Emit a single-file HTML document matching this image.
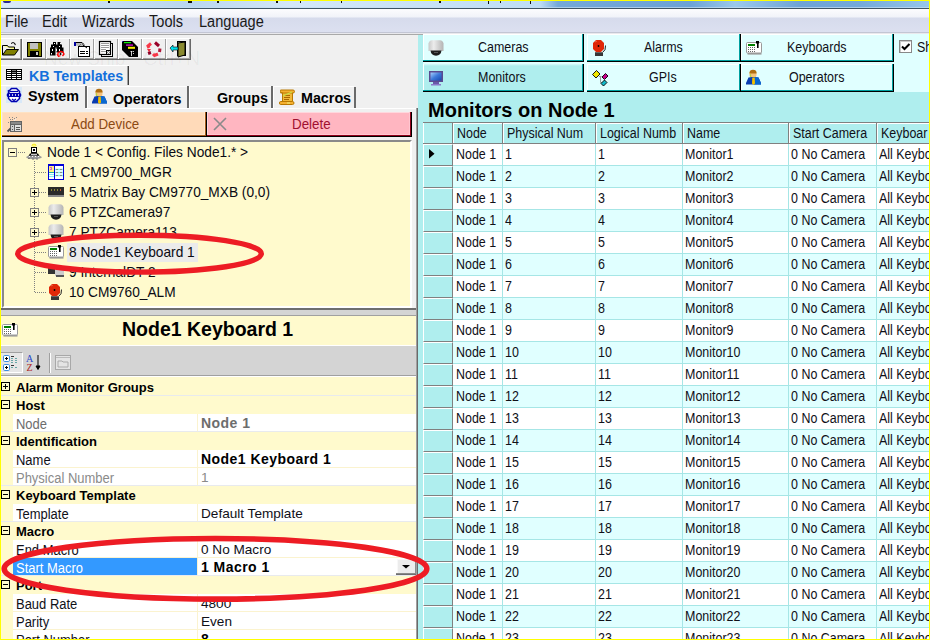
<!DOCTYPE html>
<html><head><meta charset="utf-8">
<style>
*{box-sizing:border-box;margin:0;padding:0}
html,body{width:930px;height:640px;overflow:hidden;background:#F0F0F0}
body{position:relative;font-family:"Liberation Sans",sans-serif;color:#000}
.a{position:absolute}
.t{position:absolute;white-space:nowrap;line-height:1}
svg{position:absolute;overflow:visible}
.mn{top:14px;font-size:16px;transform:scaleX(.91);transform-origin:0 0;color:#1a1a1a}
.tab{position:absolute;font-weight:bold;font-size:14.3px;white-space:nowrap;line-height:1}
.tr{position:absolute;font-size:14.5px;transform:scaleX(.945);transform-origin:0 0;margin-top:-1px;white-space:nowrap;line-height:1;color:#0a0a14}
.dl{position:absolute;background-image:linear-gradient(to right,#808080 50%,transparent 50%);background-size:2px 1px;height:1px}
.dv{position:absolute;background-image:linear-gradient(#808080 50%,transparent 50%);background-size:1px 2px;width:1px}
.pb{position:absolute;width:9px;height:9px;border:1px solid #808080;background:#FFFACD}
.pb:before{content:"";position:absolute;left:1px;top:3px;width:5px;height:1px;background:#000}
.pb.p:after{content:"";position:absolute;left:3px;top:1px;width:1px;height:5px;background:#000}
.pc{position:absolute;left:16px;margin-top:-1px;font-weight:bold;font-size:13px;white-space:nowrap;line-height:1}
.pn{position:absolute;left:16px;margin-top:-0.5px;font-size:13.8px;transform:scaleX(.94);transform-origin:0 0;white-space:nowrap;line-height:1;color:#101018}
.pv{position:absolute;left:201px;margin-top:-1.5px;font-size:13.6px;white-space:nowrap;line-height:1;color:#101018}
.pvb{position:absolute;left:201px;margin-top:-2px;font-size:14px;font-weight:bold;letter-spacing:.45px;white-space:nowrap;line-height:1}
.prow{position:absolute;left:13px;width:404px;height:17px;background:#fff}
.prow:after{content:"";position:absolute;left:184px;top:0;width:1px;height:17px;background:#FBF3CF}
.pline{position:absolute;left:1px;width:416px;height:1px;background:#E8EAEE}
.pbx{position:absolute;left:1px;width:9px;height:9px;border:1px solid #000;background:transparent}
.pbx:before{content:"";position:absolute;left:1px;top:3px;width:5px;height:1px;background:#000}
.pbx.p:after{content:"";position:absolute;left:3px;top:1px;width:1px;height:5px;background:#000}
.btn{position:absolute;height:28px;background:#E0FFFF;box-shadow:inset -1px -1px 0 #000, inset -2px -2px 0 #00A0A0, inset 1px 1px 0 #fff}
.bt{position:absolute;font-size:14px;transform:scaleX(.89);transform-origin:0 0;margin-top:-1px;white-space:nowrap;line-height:1;color:#101018}
.gh{position:absolute;font-size:14px;transform:scaleX(.89);transform-origin:0 0;white-space:nowrap;line-height:1;color:#101018;top:126px}
.gr{position:absolute;left:423px;width:506px;height:22px;border-bottom:1px solid #A6E6E6}
.gr.o{background:#fff}.gr.e{background:#E0FFFF}
.rh{position:absolute;left:0;top:0;width:30px;height:22px;background:#AFEEEE;border-left:1px solid #fff;border-top:1px solid #fff;border-bottom:1px solid #808080;border-right:1px solid #808080}
.gc{position:absolute;top:0;width:1px;height:21px;background:#A6E6E6}
.gt{position:absolute;top:3px;font-size:14px;transform:scaleX(.89);transform-origin:0 0;white-space:nowrap;line-height:1;color:#101018}
.tb{position:absolute;top:38px;height:21px;width:24px;border-top:1px solid #fff;border-left:1px solid #fff;box-shadow:inset -1px -1px 0 #A0A0A0, 1px 1px 0 #696969;background:#F0F0F0}

</style></head><body>

<!-- title bar -->
<div class="a" style="left:0;top:0;width:930px;height:8px;background:linear-gradient(to right,#DAEAF7 0px,#B9D6EF 190px,#D3E7F8 290px,#BEDDF5 540px,#74A8D8 558px,#6CA2D6 690px,#9BC9EC 735px,#6EA3D6 800px,#74A9DA 860px,#96C6EA 928px)"></div>
<div class="a" style="left:3px;top:1px;width:8px;height:2px;background:#2a2a90;border-radius:0 0 3px 3px"></div>
<div class="a" style="left:108px;top:1px;width:2px;height:2px;background:#111"></div>
<div class="a" style="left:188px;top:1px;width:4px;height:2px;background:#111"></div>
<div class="a" style="left:217px;top:1px;width:2px;height:2px;background:#111"></div>
<div class="a" style="left:276px;top:1px;width:2px;height:2px;background:#111"></div>
<div class="a" style="left:300px;top:1px;width:1px;height:2px;background:#111"></div>
<div class="a" style="left:341px;top:1px;width:1px;height:2px;background:#111"></div>
<div class="a" style="left:439px;top:1px;width:2px;height:2px;background:#111"></div>
<div class="a" style="left:488px;top:1px;width:1px;height:3px;background:#111"></div>
<div class="a" style="left:500px;top:1px;width:1px;height:2px;background:#111"></div>
<div class="a" style="left:530px;top:1px;width:1px;height:3px;background:#111"></div>
<div class="a" style="left:0;top:7px;width:930px;height:1px;background:#C5DDF0;opacity:.7"></div>
<div class="a" style="left:0;top:8px;width:930px;height:1px;background:#3F5565"></div>
<!-- menu bar -->
<div class="a" style="left:0;top:9px;width:930px;height:24px;background:linear-gradient(#FCFCFE 0px,#F1F3F9 8px,#D6DBEC 9px,#DCE0F0 23px)"></div>
<div class="a" style="left:0;top:32px;width:930px;height:1px;background:#C3C6D4"></div>
<div class="a" style="left:0;top:33px;width:930px;height:1px;background:#E9E9ED"></div>
<div class="a" style="left:0;top:34px;width:930px;height:1px;background:#A9A9A9"></div>
<div class="t mn" style="left:5px">File</div>
<div class="t mn" style="left:42px">Edit</div>
<div class="t mn" style="left:81.5px">Wizards</div>
<div class="t mn" style="left:148.5px">Tools</div>
<div class="t mn" style="left:198.5px">Language</div>

<!-- LEFT PANEL -->
<div id="left" class="a" style="left:0;top:35px;width:417px;height:605px;background:#F0F0F0"></div>
<!-- toolbar -->
<div class="tb" style="left:-3px"></div>
<div class="tb" style="left:22px"></div>
<div class="tb" style="left:46px"></div>
<div class="tb" style="left:70px"></div>
<div class="tb" style="left:94px"></div>
<div class="tb" style="left:118px"></div>
<div class="tb" style="left:142px"></div>
<div class="tb" style="left:166px"></div>
<!-- icons -->
<svg style="left:2px;top:41px" width="17" height="15" viewBox="0 0 17 15">
 <path d="M0.5 4.5h5l1 1.5h6v3" fill="#FFFF80" stroke="#000"/>
 <path d="M0.5 4.5v9.5h12l4-5.5h-12l-4 5.5" fill="#808000" stroke="#000"/>
 <path d="M9 2.5q2-2 4 0" fill="none" stroke="#000"/><path d="M12 2l2 1-1 1.5z" fill="#000"/>
</svg>
<svg style="left:27px;top:42px" width="15" height="15" viewBox="0 0 15 15">
 <rect x="0.5" y="0.5" width="14" height="14" fill="#808000" stroke="#000"/>
 <rect x="3" y="1" width="8" height="6" fill="#C0C0C0"/>
 <rect x="3" y="9" width="9" height="5" fill="#000"/><rect x="9" y="10" width="2" height="3" fill="#ccc"/>
</svg>
<svg style="left:49px;top:41px" width="17" height="17" viewBox="0 0 17 17">
 <path d="M4 1h3v2.5h1.5V1h3v2.5h1.5v3h1.5v5h-7v-5h-1v8H1v-8h1v-3h2z" fill="#000"/>
 <path d="M5.5 2v1M11.5 2v1M4.5 5v1M10.5 5v1M3.5 8v2M7.5 8v2M10.5 8v2M2.5 12v1.5" stroke="#fff"/>
 <path d="M9 14.5V12q2-2 3.5-1.5 2 .5 2.5 2.5l-1.5 2" fill="none" stroke="#f00" stroke-width="1.3"/>
 <path d="M8 13l1.5 2.5 2-1" fill="none" stroke="#f00" stroke-width="1.2"/>
 <circle cx="11.5" cy="13" r="1" fill="#000"/>
</svg>
<svg style="left:74px;top:41px" width="16" height="16" viewBox="0 0 16 16">
 <rect x="0" y="1" width="2" height="4" fill="#0000A0"/>
 <path d="M2 1.5h6l3 3v1H6l-4-1z" fill="#B8B8B8"/>
 <path d="M2 1.5h6l2 2" fill="none" stroke="#000"/>
 <path d="M6 3l1 1M8 3l1 1M7 5l1 1M9 5l1 1M11 6l1 1M5 4l1 1" stroke="#555" stroke-width=".7"/>
 <rect x="4.5" y="5.5" width="11" height="10" fill="#fff" stroke="#000"/>
 <path d="M6 10.5h5M12 10.5h2M6 12.5h5M12 12.5h2" stroke="#000"/>
 <path d="M9 4l4 3" stroke="#000"/>
</svg>
<svg style="left:99px;top:41px" width="15" height="16" viewBox="0 0 15 16">
 <rect x="2.5" y="2.5" width="11" height="13" fill="#fff" stroke="#000"/>
 <rect x="0.5" y="0.5" width="11" height="13" fill="#fff" stroke="#000" stroke-width="1.2"/>
 <path d="M2 2.5h8M2 4.5h8M2 6.5h8M2 8.5h5M2 10.5h5" stroke="#9a9a9a"/>
 <rect x="7.5" y="9.5" width="4" height="4" fill="#fff" stroke="#000"/>
 <circle cx="9.5" cy="11.5" r="1" fill="none" stroke="#555" stroke-width=".8"/>
</svg>
<svg style="left:122px;top:41px" width="16" height="16" viewBox="0 0 16 16">
 <path d="M0 0h10l6 6v10H7L0 9z" fill="#000"/>
 <rect x="0" y="0" width="1" height="1" fill="#2030C0"/>
 <rect x="2" y="1" width="7" height="1.2" fill="#10F010"/><rect x="4" y="3.5" width="7" height="1.2" fill="#F010F0"/><rect x="6" y="5.8" width="7" height="2" fill="#F8F000"/>
 <path d="M9.5 10v5M8.5 11l1-1 1 1M11.5 10v1M11.5 12v1" stroke="#fff" stroke-width=".8"/>
</svg>
<svg style="left:146px;top:41px" width="16" height="16" viewBox="0 0 16 16">
 <path d="M5 2.5L2 5l1 2" fill="none" stroke="#F83848" stroke-width="3"/>
 <path d="M9 1.5l4 3.5" fill="none" stroke="#980028" stroke-width="3"/>
 <path d="M14 7.5l-.5 3.5" fill="none" stroke="#B01838" stroke-width="3"/>
 <path d="M12 13l-3.5 1.5L7 13" fill="none" stroke="#F83848" stroke-width="3"/>
 <path d="M3 10.5l1 3" fill="none" stroke="#900028" stroke-width="3"/>
 <path d="M1 8h4l-2 3z" fill="#F02838"/>
</svg>
<svg style="left:170px;top:41px" width="16" height="16" viewBox="0 0 16 16">
 <rect x="7.5" y="0.5" width="8" height="14" fill="#999" stroke="#000"/>
 <path d="M8 2l7-1v13l-7 2z" fill="#8a8a30" stroke="#000"/>
 <path d="M0 7l3-3v2h5v3H3v2z" fill="#00E0F0" stroke="#000" stroke-width=".6"/>
</svg>

<div class="a" style="left:0;top:35px;width:400px;height:30px;overflow:hidden;color:rgba(0,0,0,.045)"><div class="t" style="left:44px;top:13px;font-size:20px;transform:scaleX(.95);transform-origin:0 0">New Ship</div><div class="t" style="left:143px;top:13px;font-size:20px">Ctrl+N</div></div>
<!-- tabs -->
<div class="a" style="left:1px;top:65px;width:128px;height:20px;border-top:1px solid #fff;box-shadow:inset -1px 0 0 #404040, inset -2px 0 0 #A0A0A0"></div>
<svg style="left:6px;top:69px" width="16" height="11" viewBox="0 0 16 11">
 <rect x="0" y="0" width="16" height="11" fill="#000"/>
 <path d="M1 1.5h4M6 1.5h4M11 1.5h4M1 3.5h4M6 3.5h4M11 3.5h4M1 5.5h4M6 5.5h4M11 5.5h4M1 7.5h4M6 7.5h4M11 7.5h4M1 9.5h4M6 9.5h4M11 9.5h4" stroke="#fff"/>
 <path d="M6 1.5h4M6 3.5h4" stroke="#777"/>
</svg>
<div class="tab" style="left:29px;top:69px;color:#1470DC">KB Templates</div>
<div class="a" style="left:1px;top:85px;width:85px;height:1px;background:#fff"></div>
<div class="a" style="left:85px;top:86px;width:2px;height:22px;background:#6a6a6a"></div>
<div class="a" style="left:87px;top:86px;width:267px;height:1px;background:#fff"></div>
<div class="a" style="left:86px;top:108px;width:331px;height:1px;background:#fff"></div>
<div class="a" style="left:187px;top:86px;width:2px;height:22px;background:#6a6a6a"></div>
<div class="a" style="left:189px;top:86px;width:1px;height:22px;background:#fff"></div>
<div class="a" style="left:271px;top:86px;width:2px;height:22px;background:#6a6a6a"></div>
<div class="a" style="left:273px;top:86px;width:1px;height:22px;background:#fff"></div>
<div class="a" style="left:354px;top:87px;width:2px;height:21px;background:#6a6a6a"></div>
<div class="a" style="left:87px;top:86px;width:1px;height:22px;background:#fff"></div>
<svg style="left:6px;top:87px" width="16" height="16" viewBox="0 0 16 16">
 <rect width="16" height="16" fill="#D8E8F8"/>
 <path d="M5.5 1.5h5l3 3v7l-3 3h-5l-3-3v-7z" fill="#fff" stroke="#0000B0" stroke-width="1.5"/>
 <rect x="0.8" y="6" width="14.4" height="4" fill="#0000B0" rx="1.5"/>
 <path d="M3 8h1M6 8h1M9 8h1M12 8h1" stroke="#fff" stroke-width="1.3"/>
 <path d="M4 4.5h8" stroke="#0000B0" stroke-width="1.2"/>
 <path d="M6 12l2 1.5 2-1.5" fill="none" stroke="#0000B0" stroke-width="1.2"/>
 <path d="M2 3l1.5 2.5" stroke="#0000B0" stroke-width="1.2"/>
</svg>
<div class="tab" style="left:28px;top:89px">System</div>
<svg style="left:92px;top:88px" width="16" height="16" viewBox="0 0 16 16">
 <rect x="3.5" y="2" width="7" height="6.5" rx="2.5" fill="#F6C27A"/>
 <path d="M3.5 3.5q0-2.5 3.5-2.8 3.5.3 3.5 2.8v1h-7z" fill="#B06E10"/>
 <path d="M4.5 5v3l2 1" fill="none" stroke="#B8D040" stroke-width="1.2"/>
 <path d="M0 14l2.5-5.5 3.5-.5h3l3.5.5L15 14v1.5H0z" fill="#0A3CB0"/>
 <path d="M7.5 8h1.5l3.5.5L15 14v1.5H7.5z" fill="#0A68D0"/>
 <path d="M6.3 8.5h2.4l.3 6-1.5 1.5-1.5-1.5z" fill="#F4C000"/>
</svg>
<div class="tab" style="left:113px;top:92px">Operators</div>
<div class="tab" style="left:217px;top:91px">Groups</div>
<svg style="left:279px;top:89px" width="16" height="17" viewBox="0 0 16 17">
 <path d="M3.5 3.5h10v9h-10z" fill="#F2B838" stroke="#B87800"/>
 <path d="M1.5 1h12.5q1.5 0 1.5 1.5t-1.5 1.5H3.5q-2 0-2-1.5 0-1.5 0-1.5z" fill="#F4B030" stroke="#B87800"/>
 <path d="M1 3.5q1 1 2.5 0" fill="none" stroke="#B87800"/>
 <path d="M5 6.5h6M5 8.5h6M5 10.5h5" stroke="#A86800"/>
 <path d="M4 7l9-4" stroke="#C8E048" stroke-width="1.2"/>
 <path d="M1.5 12.5h12q1.5 0 1.5 1.5t-1.5 1.5H1.5q-1 0-1-1.5t1-1.5z" fill="#F4B030" stroke="#B87800"/>
 <path d="M8 14h3" stroke="#E8F080"/>
</svg>
<div class="tab" style="left:301px;top:91px">Macros</div>

<!-- buttons -->
<div class="a" style="left:2px;top:112px;width:205px;height:25px;background:#FFDAB9;box-shadow:inset -1px -1px 0 #000, inset -2px -2px 0 #A85A1A, inset -3px -3px 0 #FEE6CC, inset 1px 1px 0 #FEE2C4"></div>
<svg style="left:7px;top:117px" width="16" height="16" viewBox="0 0 16 16">
 <path d="M1 5.5h1M2 0.5h1M3 2.5h1M5 0.5h1M5 2.5h1M7 1.5h1M9 0.5h1" stroke="#8a8a8a"/>
 <rect x="3" y="4" width="12" height="11" fill="#646464"/>
 <rect x="4" y="5" width="10" height="2" fill="#8a8a8a"/>
 <rect x="4" y="8" width="3" height="6" fill="#D0D0D0"/><path d="M5 9.5h1M5 12.5h1" stroke="#555"/>
 <rect x="8" y="8" width="6" height="6" fill="#E0E0E0"/><path d="M9 10.5h4M9 12.5h4" stroke="#555"/>
 <path d="M0.5 14.5l3-3" stroke="#555" stroke-width="1.8"/>
 <path d="M7 4l2-2" stroke="#eee"/>
</svg>
<div class="t" style="left:71px;top:116.5px;font-size:14.5px;transform:scaleX(.92);transform-origin:0 0;color:#8B4A14">Add Device</div>
<div class="a" style="left:207px;top:112px;width:205px;height:25px;background:#FFB6C1;box-shadow:inset -1px -1px 0 #000, inset -2px -2px 0 #90001A, inset -3px -3px 0 #FFC6D0, inset 1px 1px 0 #FFD8DE"></div>
<svg style="left:213px;top:117px" width="14" height="14" viewBox="0 0 14 14">
 <path d="M1 1l12 12M13 1L1 13" stroke="#8a8a8a" stroke-width="1.6"/>
</svg>
<div class="t" style="left:292px;top:116.5px;font-size:14.5px;transform:scaleX(.92);transform-origin:0 0;color:#A01030">Delete</div>

<!-- tree panel -->
<div class="a" style="left:2px;top:140px;width:410px;height:168px;background:#FFFACD;border-top:2px solid #8a8a8a;border-left:2px solid #8a8a8a;border-bottom:2px solid #fff;border-right:2px solid #fff"></div>
<div class="pb" style="left:8px;top:148px"></div>
<div class="dl" style="left:18px;top:152px;width:8px"></div>
<div class="dv" style="left:34px;top:161px;height:132px"></div>
<div class="dl" style="left:35px;top:172px;width:12px"></div>
<div class="dl" style="left:39px;top:192px;width:8px"></div>
<div class="dl" style="left:39px;top:212px;width:8px"></div>
<div class="dl" style="left:39px;top:232px;width:8px"></div>
<div class="dl" style="left:35px;top:252px;width:12px"></div>
<div class="dl" style="left:35px;top:272px;width:12px"></div>
<div class="dl" style="left:35px;top:292px;width:12px"></div>
<div class="pb p" style="left:30px;top:188px"></div>
<div class="pb p" style="left:30px;top:208px"></div>
<div class="pb p" style="left:30px;top:228px"></div>
<!-- tree icons -->
<svg style="left:26px;top:144px" width="16" height="16" viewBox="0 0 16 16">
 <ellipse cx="8" cy="1.2" rx="2" ry="1" fill="none" stroke="#F4E800" stroke-width=".9"/>
 <rect x="5" y="3" width="6" height="6.5" fill="#000"/><rect x="6" y="4" width="4" height="4" fill="#fff"/><rect x="7" y="5" width="2" height="2" fill="#000"/>
 <path d="M4 9.5h8l1.5 2.5h-11z" fill="#000"/><path d="M5 10.5h6" stroke="#fff" stroke-width=".8"/>
 <ellipse cx="8" cy="13.2" rx="7.8" ry="2" fill="#9a9a9a"/>
 <path d="M3 12.5h1M6 12.5h1M9 12.5h1M12 12.5h1" stroke="#fff"/>
 <path d="M2 14.5h2M6 15h2M10 15h2" stroke="#777"/>
</svg>
<svg style="left:48px;top:164px" width="16" height="16" viewBox="0 0 16 16">
 <rect x="0" y="0" width="16" height="16" fill="#0000D8"/>
 <rect x="1" y="2" width="5" height="13" fill="#fff"/><rect x="1" y="2" width="5" height="6" fill="#FFF080"/>
 <path d="M2 3.5h2M3 4.5h1M2 5.5h2" stroke="#C040E0" stroke-width=".8"/>
 <path d="M1 8.5h5" stroke="#20B0A0"/><path d="M1 10.5h5M1 12.5h5" stroke="#80F0F0"/>
 <rect x="7" y="2" width="8" height="13" fill="#fff"/>
 <path d="M7 5.5h8M7 8.5h8M7 11.5h8" stroke="#80F0F0" stroke-width="1.5"/>
 <path d="M8 5.5h2M12 5.5h2M8 8.5h2M12 8.5h2M8 11.5h2M12 11.5h2" stroke="#888"/>
</svg>
<svg style="left:48px;top:186px" width="16" height="12" viewBox="0 0 16 12">
 <rect x="0" y="1" width="16" height="9" fill="#2a2a2a"/><rect x="0" y="9" width="16" height="2" fill="#888"/>
 <path d="M3 4h1M6 4h1M9 4h1M12 4h1" stroke="#F0E040"/><path d="M12 4h1" stroke="#f33"/>
</svg>
<svg style="left:48px;top:204px" width="16" height="16" viewBox="0 0 16 16">
 <path d="M0.5 3.5Q1 0.5 4 0.3h8q3 .2 3.5 3.2V11h-15z" fill="url(#dm)"/>
 <path d="M2.5 10.5h11q-.5 5-5.5 5.3-5-.3-5.5-5.3z" fill="#1E1E1E"/>
 <path d="M6 12.5h4" stroke="#555"/>
</svg>
<svg style="left:48px;top:224px" width="16" height="16" viewBox="0 0 16 16">
 <path d="M0.5 3.5Q1 0.5 4 0.3h8q3 .2 3.5 3.2V11h-15z" fill="url(#dm)"/>
 <path d="M2.5 10.5h11q-.5 5-5.5 5.3-5-.3-5.5-5.3z" fill="#1E1E1E"/>
 <path d="M6 12.5h4" stroke="#555"/>
</svg>
<div class="a" style="left:67px;top:243px;width:131px;height:19px;background:#EBEBEB"></div>
<svg style="left:48px;top:244px" width="16" height="16" viewBox="0 0 16 16">
 <path d="M1.5 13.8h14" stroke="#9a9a9a" stroke-width="1.6"/>
 <rect x="0.5" y="2.5" width="15" height="10.5" rx="1" fill="#fff" stroke="#9a9a9a"/>
 <rect x="2" y="4" width="7" height="2" fill="#008000"/>
 <path d="M2 7.5h1M4 7.5h1M6 7.5h1M8 7.5h1M2 9.5h1M4 9.5h1M6 9.5h1M8 9.5h1M2 11.5h1M4 11.5h1M6 11.5h1M8 11.5h1" stroke="#666"/>
 <rect x="10" y="1" width="3" height="2.5" fill="#000"/><rect x="11" y="3" width="1.6" height="5" fill="#000"/>
</svg>
<svg style="left:48px;top:266px" width="16" height="12" viewBox="0 0 16 12">
 <rect x="0" y="2" width="8" height="6" fill="#333"/><rect x="7" y="1" width="9" height="9" fill="#ccc"/><path d="M8 10h8" stroke="#555" stroke-width="2"/>
</svg>
<svg style="left:48px;top:284px" width="16" height="16" viewBox="0 0 16 16">
 <path d="M4 0h5l3 3v6l-3 3H4L1 9V3z" fill="#E02808"/>
 <path d="M3 2l2-1" stroke="#F06040"/>
 <circle cx="6.5" cy="6" r="0.9" fill="#000"/>
 <path d="M13.5 5.5q.5 5-3 7" fill="none" stroke="#222"/>
 <rect x="3" y="12" width="8" height="4" fill="#383838"/><path d="M3 12.5h8" stroke="#666"/>
</svg>
<div class="tr" style="left:47px;top:146px">Node 1 &lt; Config. Files Node1.* &gt;</div>
<div class="tr" style="left:69px;top:166px">1 CM9700_MGR</div>
<div class="tr" style="left:69px;top:186px">5 Matrix Bay CM9770_MXB (0,0)</div>
<div class="tr" style="left:69px;top:206px">6 PTZCamera97</div>
<div class="tr" style="left:69px;top:226px">7 PTZCamera113</div>
<div class="tr" style="left:69px;top:246px">8 Node1 Keyboard 1</div>
<div class="tr" style="left:69px;top:266px">9 InternalDT 2</div>
<div class="tr" style="left:69px;top:286px">10 CM9760_ALM</div>
<!-- ghost tooltip text -->


<!-- splitter -->
<div class="a" style="left:1px;top:308px;width:416px;height:2px;background:#6E6E6E"></div>
<div class="a" style="left:1px;top:310px;width:416px;height:5px;background:#D4D4D4"></div>
<div class="a" style="left:1px;top:315px;width:416px;height:1px;background:#A0A0A0"></div>
<!-- property header -->
<div class="a" style="left:1px;top:316px;width:416px;height:29px;background:#FFFACD"></div>
<svg style="left:2px;top:322px" width="16" height="16" viewBox="0 0 16 16">
 <path d="M1.5 13.8h14" stroke="#9a9a9a" stroke-width="1.6"/>
 <rect x="0.5" y="2.5" width="15" height="10.5" rx="1" fill="#fff" stroke="#9a9a9a"/>
 <rect x="2" y="4" width="7" height="2" fill="#008000"/>
 <path d="M2 7.5h1M4 7.5h1M6 7.5h1M8 7.5h1M2 9.5h1M4 9.5h1M6 9.5h1M8 9.5h1M2 11.5h1M4 11.5h1M6 11.5h1M8 11.5h1" stroke="#666"/>
 <rect x="10" y="1" width="3" height="2.5" fill="#000"/><rect x="11" y="3" width="1.6" height="5" fill="#000"/>
</svg>
<div class="t" style="left:122px;top:320px;font-size:19.5px;font-weight:bold">Node1 Keyboard 1</div>
<div class="a" style="left:1px;top:345px;width:416px;height:1px;background:#fff"></div>
<div class="a" style="left:1px;top:346px;width:416px;height:30px;background:#D4D4D4"></div>
<div class="a" style="left:1px;top:352px;width:22px;height:21px;background:#E6E6E6;border-top:1px solid #A0A0A0;border-right:1px solid #fff;border-bottom:1px solid #fff"></div>
<svg style="left:3px;top:354px" width="18" height="18" viewBox="0 0 18 18">
 <rect x="0.5" y="1.5" width="6" height="6" rx="1.2" fill="#fff" stroke="#3C8CE0"/><path d="M2 4.5h3M3.5 3v3" stroke="#000"/>
 <rect x="0.5" y="10.5" width="6" height="6" rx="1.2" fill="#fff" stroke="#3C8CE0"/><path d="M2 13.5h3M3.5 12v3" stroke="#000"/>
 <path d="M8 2.5h3M8 11.5h3" stroke="#333"/>
 <path d="M8 4.5h2M12 4.5h2M8 6.5h2M12 6.5h2M8 8.5h2M12 8.5h2M8 13.5h2M12 13.5h2" stroke="#6AA8A8"/>
</svg>
<svg style="left:26px;top:354px" width="18" height="18" viewBox="0 0 18 18">
 <text x="0" y="8" font-family="Liberation Serif" font-size="10" fill="#2848C8">A</text>
 <text x="0.5" y="16.5" font-family="Liberation Serif" font-size="10" fill="#B02828">Z</text>
 <path d="M12 1v14" stroke="#000"/><path d="M10 12l2 3.5 2-3.5z" fill="#000" stroke="#000"/>
</svg>
<div class="a" style="left:49px;top:353px;width:1px;height:20px;background:#A0A0A0"></div>
<div class="a" style="left:50px;top:353px;width:1px;height:20px;background:#fff"></div>
<svg style="left:55px;top:355px" width="16" height="15" viewBox="0 0 16 15">
 <rect x="0.5" y="0.5" width="15" height="14" fill="#E4E4E4" stroke="#A8A8A8"/><path d="M1 2.5h14" stroke="#bbb"/>
 <path d="M3 6h4l1 1h5v5H3z" fill="none" stroke="#aaa"/>
</svg>
<div class="a" style="left:1px;top:375px;width:416px;height:1px;background:#A0A0A0"></div>
<div class="a" style="left:1px;top:376px;width:416px;height:1px;background:#fff"></div>
<!-- rows -->
<div class="a" style="left:1px;top:377px;width:416px;height:263px;background:#FFFACD"></div>
<div class="pline" style="top:395px"></div>
<div class="pline" style="top:413px;background:#FFFACD"></div>
<div class="pline" style="top:431px"></div>
<div class="pline" style="top:485px"></div>
<div class="pline" style="top:521px"></div>
<div class="pline" style="top:575px"></div>
<div class="prow" style="top:414px"></div>
<div class="prow" style="top:450px"></div>
<div class="prow" style="top:468px"></div>
<div class="prow" style="top:504px"></div>
<div class="prow" style="top:540px"></div>
<div class="prow" style="top:558px"></div>
<div class="prow" style="top:594px"></div>
<div class="prow" style="top:612px"></div>
<div class="prow" style="top:630px"></div>
<div class="a" style="left:13px;top:449px;width:404px;height:1px;background:#FFFACD"></div>
<div class="a" style="left:13px;top:467px;width:404px;height:1px;background:#FBF3CF"></div>
<div class="a" style="left:13px;top:539px;width:404px;height:1px;background:#FFFACD"></div>
<div class="a" style="left:13px;top:557px;width:404px;height:1px;background:#FBF3CF"></div>
<div class="a" style="left:13px;top:611px;width:404px;height:1px;background:#FBF3CF"></div>
<div class="a" style="left:13px;top:629px;width:404px;height:1px;background:#FBF3CF"></div>
<div class="a" style="left:13px;top:558px;width:184px;height:17px;background:#3399FF"></div>
<div class="pbx p" style="top:382px"></div>
<div class="pbx" style="top:400px"></div>
<div class="pbx" style="top:436px"></div>
<div class="pbx" style="top:490px"></div>
<div class="pbx" style="top:526px"></div>
<div class="pbx" style="top:580px"></div>
<div class="pc" style="top:382px">Alarm Monitor Groups</div>
<div class="pc" style="top:400px">Host</div>
<div class="pn" style="top:418px;color:#6D6D6D">Node</div>
<div class="pvb" style="top:418px;color:#6D6D6D">Node 1</div>
<div class="pc" style="top:436px">Identification</div>
<div class="pn" style="top:454px">Name</div>
<div class="pvb" style="top:454px">Node1 Keyboard 1</div>
<div class="pn" style="top:472px;color:#8A8A8A">Physical Number</div>
<div class="pv" style="top:472px;color:#8A8A8A">1</div>
<div class="pc" style="top:490px">Keyboard Template</div>
<div class="pn" style="top:508px">Template</div>
<div class="pv" style="top:508px">Default Template</div>
<div class="pc" style="top:526px">Macro</div>
<div class="pn" style="top:544px">End Macro</div>
<div class="pv" style="top:544px">0 No Macro</div>
<div class="pn" style="top:562px;color:#fff">Start Macro</div>
<div class="pvb" style="top:562px">1 Macro 1</div>
<div class="a" style="left:396px;top:558px;width:21px;height:17px;background:#ECECEC;box-shadow:inset -1px -1px 0 #6E6E6E, inset -2px -2px 0 #8A8A8A, inset 1px 1px 0 #fff, inset 2px 2px 0 #F8F8F8"></div>
<svg style="left:402px;top:565px" width="9" height="4" viewBox="0 0 9 4"><path d="M0 0h8l-4 3.6z" fill="#000"/></svg>
<div class="pc" style="top:580px">Port</div>
<div class="pn" style="top:598px">Baud Rate</div>
<div class="pv" style="top:598px">4800</div>
<div class="pn" style="top:616px">Parity</div>
<div class="pv" style="top:616px">Even</div>
<div class="pn" style="top:634px">Port Number</div>
<div class="pvb" style="top:634px">8</div>
<!-- RIGHT PANEL -->
<div class="a" style="left:416px;top:108px;width:1px;height:532px;background:#A0A0A0"></div>
<div class="a" style="left:417px;top:108px;width:1px;height:532px;background:#6A6A6A"></div>
<div class="a" style="left:418px;top:35px;width:512px;height:605px;background:#AFEEEE"></div>
<div class="a" style="left:423px;top:34px;width:506px;height:58px;background:#E0FFFF"></div>
<div class="btn" style="left:423px;top:34px;width:161px"></div>
<div class="btn" style="left:587px;top:34px;width:154px"></div>
<div class="btn" style="left:741px;top:34px;width:153px"></div>
<div class="btn" style="left:423px;top:64px;width:161px;background:linear-gradient(#D8FAFA 0,#AFEEEE 2px);box-shadow:inset -1px -1px 0 #000, inset -2px -2px 0 #00A0A0, inset 1px 0 0 #fff"></div>
<div class="btn" style="left:587px;top:64px;width:154px"></div>
<div class="btn" style="left:741px;top:64px;width:153px"></div>
<div class="a" style="left:894px;top:34px;width:35px;height:58px;background:#E0FFFF"></div>
<div class="bt" style="left:478px;top:41px">Cameras</div>
<div class="bt" style="left:644px;top:41px">Alarms</div>
<div class="bt" style="left:787px;top:41px">Keyboards</div>
<div class="bt" style="left:478px;top:71px">Monitors</div>
<div class="bt" style="left:649px;top:71px">GPIs</div>
<div class="bt" style="left:789px;top:71px">Operators</div>
<svg style="left:428px;top:40px" width="16" height="16" viewBox="0 0 16 16">
 <defs><linearGradient id="dm" x1="0" x2="1"><stop offset="0" stop-color="#C8C8C8"/><stop offset=".35" stop-color="#ECECEC"/><stop offset="1" stop-color="#B4B4B4"/></linearGradient></defs>
 <path d="M0.5 3.5Q1 0.5 4 0.3h8q3 .2 3.5 3.2V11h-15z" fill="url(#dm)"/>
 <path d="M2.5 10.5h11q-.5 5-5.5 5.3-5-.3-5.5-5.3z" fill="#1E1E1E"/>
 <path d="M6 12.5h4" stroke="#555"/>
</svg>
<svg style="left:429px;top:71px" width="14" height="15" viewBox="0 0 14 15">
 <defs><linearGradient id="mn" x1="0" y1="0" x2="1" y2="1"><stop offset="0" stop-color="#A8D0FF"/><stop offset=".5" stop-color="#3C78D8"/><stop offset="1" stop-color="#1848B0"/></linearGradient></defs>
 <rect x="0" y="0" width="14" height="11" fill="#5A4A90"/>
 <rect x="1.5" y="1.5" width="11" height="8" fill="url(#mn)"/>
 <rect x="4" y="11" width="6" height="2" fill="#6A58A8"/><rect x="2" y="13" width="10" height="1.5" fill="#8A78C8"/>
</svg>
<svg style="left:592px;top:40px" width="16" height="16" viewBox="0 0 16 16">
 <path d="M4 0h5l3 3v6l-3 3H4L1 9V3z" fill="#E02808"/>
 <path d="M3 2l2-1" stroke="#F06040"/>
 <circle cx="6.5" cy="6" r="0.9" fill="#000"/>
 <path d="M13.5 5.5q.5 5-3 7" fill="none" stroke="#222"/>
 <rect x="3" y="12" width="8" height="4" fill="#383838"/><path d="M3 12.5h8" stroke="#666"/>
</svg>
<svg style="left:592px;top:67px" width="17" height="20" viewBox="0 0 17 20">
 <path d="M7 9.5h2.5M8.5 9.5v6h2" fill="none" stroke="#999"/>
 <path d="M0.5 7.5l4-4 3.5 3.5-4 4z" fill="#F0E800" stroke="#000" stroke-width=".9"/>
 <path d="M10 10l3.5-3.5 2.5 2.5-3.5 3.5z" fill="#C8008C" stroke="#000" stroke-width=".9"/>
 <path d="M9 16.5l3.5-3.5 2.5 2.5-3.5 3.5z" fill="#10B8C8" stroke="#000" stroke-width=".9"/>
</svg>
<svg style="left:746px;top:40px" width="16" height="16" viewBox="0 0 16 16">
 <path d="M1.5 13.8h14" stroke="#9a9a9a" stroke-width="1.6"/>
 <rect x="0.5" y="2.5" width="15" height="10.5" rx="1" fill="#fff" stroke="#9a9a9a"/>
 <rect x="2" y="4" width="7" height="2" fill="#008000"/>
 <path d="M2 7.5h1M4 7.5h1M6 7.5h1M8 7.5h1M2 9.5h1M4 9.5h1M6 9.5h1M8 9.5h1M2 11.5h1M4 11.5h1M6 11.5h1M8 11.5h1" stroke="#666"/>
 <rect x="10" y="1" width="3" height="2.5" fill="#000"/><rect x="11" y="3" width="1.6" height="5" fill="#000"/>
</svg>
<svg style="left:746px;top:69px" width="16" height="16" viewBox="0 0 16 16">
 <rect x="3.5" y="2" width="7" height="6.5" rx="2.5" fill="#F6C27A"/>
 <path d="M3.5 3.5q0-2.5 3.5-2.8 3.5.3 3.5 2.8v1h-7z" fill="#B06E10"/>
 <path d="M4.5 5v3l2 1" fill="none" stroke="#B8D040" stroke-width="1.2"/>
 <path d="M0 14l2.5-5.5 3.5-.5h3l3.5.5L15 14v1.5H0z" fill="#0A3CB0"/>
 <path d="M7.5 8h1.5l3.5.5L15 14v1.5H7.5z" fill="#0A68D0"/>
 <path d="M6.3 8.5h2.4l.3 6-1.5 1.5-1.5-1.5z" fill="#F4C000"/>
</svg>
<div class="a" style="left:899px;top:40px;width:13px;height:13px;background:#fff;border:1px solid #888;box-shadow:inset 1px 1px 0 #ccc"></div>
<svg style="left:901px;top:43px" width="9" height="8" viewBox="0 0 9 8"><path d="M1 3.5l2.5 2.5 5-5" fill="none" stroke="#000" stroke-width="2"/></svg>
<div class="bt" style="left:917px;top:41px">Sh</div>
<div class="t" style="left:428px;top:100px;font-size:20px;font-weight:bold">Monitors on Node 1</div>
<!-- grid -->
<div class="a" style="left:423px;top:122px;width:506px;height:1px;background:#808080"></div>
<div class="a" style="left:423px;top:123px;width:506px;height:21px;background:#AFEEEE"></div>
<div class="a" style="left:423px;top:123px;width:1px;height:20px;background:#fff"></div>
<div class="a" style="left:423px;top:143px;width:506px;height:1px;background:#808080"></div>
<div class="a" style="left:453px;top:123px;width:476px;height:1px;background:#fff"></div>
<div class="a" style="left:452px;top:123px;width:1px;height:20px;background:#808080"></div>
<div class="a" style="left:453px;top:123px;width:1px;height:20px;background:#fff"></div>
<div class="a" style="left:502px;top:123px;width:1px;height:20px;background:#808080"></div>
<div class="a" style="left:503px;top:123px;width:1px;height:20px;background:#fff"></div>
<div class="a" style="left:595px;top:123px;width:1px;height:20px;background:#808080"></div>
<div class="a" style="left:596px;top:123px;width:1px;height:20px;background:#fff"></div>
<div class="a" style="left:682px;top:123px;width:1px;height:20px;background:#808080"></div>
<div class="a" style="left:683px;top:123px;width:1px;height:20px;background:#fff"></div>
<div class="a" style="left:788px;top:123px;width:1px;height:20px;background:#808080"></div>
<div class="a" style="left:789px;top:123px;width:1px;height:20px;background:#fff"></div>
<div class="a" style="left:876px;top:123px;width:1px;height:20px;background:#808080"></div>
<div class="a" style="left:877px;top:123px;width:1px;height:20px;background:#fff"></div>
<div class="gh" style="left:457px">Node</div>
<div class="gh" style="left:507px">Physical Num</div>
<div class="gh" style="left:600px">Logical Numb</div>
<div class="gh" style="left:687px">Name</div>
<div class="gh" style="left:793px">Start Camera</div>
<div class="gh" style="left:881px">Keyboar</div>
<div class="gr o" style="top:144px"><div class="rh"><svg style="left:5px;top:4px" width="6" height="10" viewBox="0 0 6 10"><path d="M0 0l5.5 4.75L0 9.5z" fill="#000"/></svg></div><div class="gc" style="left:79px"></div><div class="gc" style="left:172px"></div><div class="gc" style="left:259px"></div><div class="gc" style="left:365px"></div><div class="gc" style="left:453px"></div><div class="gt" style="left:33px">Node 1</div><div class="gt" style="left:82px">1</div><div class="gt" style="left:175px">1</div><div class="gt" style="left:262px">Monitor1</div><div class="gt" style="left:368px">0 No Camera</div><div class="gt" style="left:456px">All Keyboards</div></div>
<div class="gr e" style="top:166px"><div class="rh"></div><div class="gc" style="left:79px"></div><div class="gc" style="left:172px"></div><div class="gc" style="left:259px"></div><div class="gc" style="left:365px"></div><div class="gc" style="left:453px"></div><div class="gt" style="left:33px">Node 1</div><div class="gt" style="left:82px">2</div><div class="gt" style="left:175px">2</div><div class="gt" style="left:262px">Monitor2</div><div class="gt" style="left:368px">0 No Camera</div><div class="gt" style="left:456px">All Keyboards</div></div>
<div class="gr o" style="top:188px"><div class="rh"></div><div class="gc" style="left:79px"></div><div class="gc" style="left:172px"></div><div class="gc" style="left:259px"></div><div class="gc" style="left:365px"></div><div class="gc" style="left:453px"></div><div class="gt" style="left:33px">Node 1</div><div class="gt" style="left:82px">3</div><div class="gt" style="left:175px">3</div><div class="gt" style="left:262px">Monitor3</div><div class="gt" style="left:368px">0 No Camera</div><div class="gt" style="left:456px">All Keyboards</div></div>
<div class="gr e" style="top:210px"><div class="rh"></div><div class="gc" style="left:79px"></div><div class="gc" style="left:172px"></div><div class="gc" style="left:259px"></div><div class="gc" style="left:365px"></div><div class="gc" style="left:453px"></div><div class="gt" style="left:33px">Node 1</div><div class="gt" style="left:82px">4</div><div class="gt" style="left:175px">4</div><div class="gt" style="left:262px">Monitor4</div><div class="gt" style="left:368px">0 No Camera</div><div class="gt" style="left:456px">All Keyboards</div></div>
<div class="gr o" style="top:232px"><div class="rh"></div><div class="gc" style="left:79px"></div><div class="gc" style="left:172px"></div><div class="gc" style="left:259px"></div><div class="gc" style="left:365px"></div><div class="gc" style="left:453px"></div><div class="gt" style="left:33px">Node 1</div><div class="gt" style="left:82px">5</div><div class="gt" style="left:175px">5</div><div class="gt" style="left:262px">Monitor5</div><div class="gt" style="left:368px">0 No Camera</div><div class="gt" style="left:456px">All Keyboards</div></div>
<div class="gr e" style="top:254px"><div class="rh"></div><div class="gc" style="left:79px"></div><div class="gc" style="left:172px"></div><div class="gc" style="left:259px"></div><div class="gc" style="left:365px"></div><div class="gc" style="left:453px"></div><div class="gt" style="left:33px">Node 1</div><div class="gt" style="left:82px">6</div><div class="gt" style="left:175px">6</div><div class="gt" style="left:262px">Monitor6</div><div class="gt" style="left:368px">0 No Camera</div><div class="gt" style="left:456px">All Keyboards</div></div>
<div class="gr o" style="top:276px"><div class="rh"></div><div class="gc" style="left:79px"></div><div class="gc" style="left:172px"></div><div class="gc" style="left:259px"></div><div class="gc" style="left:365px"></div><div class="gc" style="left:453px"></div><div class="gt" style="left:33px">Node 1</div><div class="gt" style="left:82px">7</div><div class="gt" style="left:175px">7</div><div class="gt" style="left:262px">Monitor7</div><div class="gt" style="left:368px">0 No Camera</div><div class="gt" style="left:456px">All Keyboards</div></div>
<div class="gr e" style="top:298px"><div class="rh"></div><div class="gc" style="left:79px"></div><div class="gc" style="left:172px"></div><div class="gc" style="left:259px"></div><div class="gc" style="left:365px"></div><div class="gc" style="left:453px"></div><div class="gt" style="left:33px">Node 1</div><div class="gt" style="left:82px">8</div><div class="gt" style="left:175px">8</div><div class="gt" style="left:262px">Monitor8</div><div class="gt" style="left:368px">0 No Camera</div><div class="gt" style="left:456px">All Keyboards</div></div>
<div class="gr o" style="top:320px"><div class="rh"></div><div class="gc" style="left:79px"></div><div class="gc" style="left:172px"></div><div class="gc" style="left:259px"></div><div class="gc" style="left:365px"></div><div class="gc" style="left:453px"></div><div class="gt" style="left:33px">Node 1</div><div class="gt" style="left:82px">9</div><div class="gt" style="left:175px">9</div><div class="gt" style="left:262px">Monitor9</div><div class="gt" style="left:368px">0 No Camera</div><div class="gt" style="left:456px">All Keyboards</div></div>
<div class="gr e" style="top:342px"><div class="rh"></div><div class="gc" style="left:79px"></div><div class="gc" style="left:172px"></div><div class="gc" style="left:259px"></div><div class="gc" style="left:365px"></div><div class="gc" style="left:453px"></div><div class="gt" style="left:33px">Node 1</div><div class="gt" style="left:82px">10</div><div class="gt" style="left:175px">10</div><div class="gt" style="left:262px">Monitor10</div><div class="gt" style="left:368px">0 No Camera</div><div class="gt" style="left:456px">All Keyboards</div></div>
<div class="gr o" style="top:364px"><div class="rh"></div><div class="gc" style="left:79px"></div><div class="gc" style="left:172px"></div><div class="gc" style="left:259px"></div><div class="gc" style="left:365px"></div><div class="gc" style="left:453px"></div><div class="gt" style="left:33px">Node 1</div><div class="gt" style="left:82px">11</div><div class="gt" style="left:175px">11</div><div class="gt" style="left:262px">Monitor11</div><div class="gt" style="left:368px">0 No Camera</div><div class="gt" style="left:456px">All Keyboards</div></div>
<div class="gr e" style="top:386px"><div class="rh"></div><div class="gc" style="left:79px"></div><div class="gc" style="left:172px"></div><div class="gc" style="left:259px"></div><div class="gc" style="left:365px"></div><div class="gc" style="left:453px"></div><div class="gt" style="left:33px">Node 1</div><div class="gt" style="left:82px">12</div><div class="gt" style="left:175px">12</div><div class="gt" style="left:262px">Monitor12</div><div class="gt" style="left:368px">0 No Camera</div><div class="gt" style="left:456px">All Keyboards</div></div>
<div class="gr o" style="top:408px"><div class="rh"></div><div class="gc" style="left:79px"></div><div class="gc" style="left:172px"></div><div class="gc" style="left:259px"></div><div class="gc" style="left:365px"></div><div class="gc" style="left:453px"></div><div class="gt" style="left:33px">Node 1</div><div class="gt" style="left:82px">13</div><div class="gt" style="left:175px">13</div><div class="gt" style="left:262px">Monitor13</div><div class="gt" style="left:368px">0 No Camera</div><div class="gt" style="left:456px">All Keyboards</div></div>
<div class="gr e" style="top:430px"><div class="rh"></div><div class="gc" style="left:79px"></div><div class="gc" style="left:172px"></div><div class="gc" style="left:259px"></div><div class="gc" style="left:365px"></div><div class="gc" style="left:453px"></div><div class="gt" style="left:33px">Node 1</div><div class="gt" style="left:82px">14</div><div class="gt" style="left:175px">14</div><div class="gt" style="left:262px">Monitor14</div><div class="gt" style="left:368px">0 No Camera</div><div class="gt" style="left:456px">All Keyboards</div></div>
<div class="gr o" style="top:452px"><div class="rh"></div><div class="gc" style="left:79px"></div><div class="gc" style="left:172px"></div><div class="gc" style="left:259px"></div><div class="gc" style="left:365px"></div><div class="gc" style="left:453px"></div><div class="gt" style="left:33px">Node 1</div><div class="gt" style="left:82px">15</div><div class="gt" style="left:175px">15</div><div class="gt" style="left:262px">Monitor15</div><div class="gt" style="left:368px">0 No Camera</div><div class="gt" style="left:456px">All Keyboards</div></div>
<div class="gr e" style="top:474px"><div class="rh"></div><div class="gc" style="left:79px"></div><div class="gc" style="left:172px"></div><div class="gc" style="left:259px"></div><div class="gc" style="left:365px"></div><div class="gc" style="left:453px"></div><div class="gt" style="left:33px">Node 1</div><div class="gt" style="left:82px">16</div><div class="gt" style="left:175px">16</div><div class="gt" style="left:262px">Monitor16</div><div class="gt" style="left:368px">0 No Camera</div><div class="gt" style="left:456px">All Keyboards</div></div>
<div class="gr o" style="top:496px"><div class="rh"></div><div class="gc" style="left:79px"></div><div class="gc" style="left:172px"></div><div class="gc" style="left:259px"></div><div class="gc" style="left:365px"></div><div class="gc" style="left:453px"></div><div class="gt" style="left:33px">Node 1</div><div class="gt" style="left:82px">17</div><div class="gt" style="left:175px">17</div><div class="gt" style="left:262px">Monitor17</div><div class="gt" style="left:368px">0 No Camera</div><div class="gt" style="left:456px">All Keyboards</div></div>
<div class="gr e" style="top:518px"><div class="rh"></div><div class="gc" style="left:79px"></div><div class="gc" style="left:172px"></div><div class="gc" style="left:259px"></div><div class="gc" style="left:365px"></div><div class="gc" style="left:453px"></div><div class="gt" style="left:33px">Node 1</div><div class="gt" style="left:82px">18</div><div class="gt" style="left:175px">18</div><div class="gt" style="left:262px">Monitor18</div><div class="gt" style="left:368px">0 No Camera</div><div class="gt" style="left:456px">All Keyboards</div></div>
<div class="gr o" style="top:540px"><div class="rh"></div><div class="gc" style="left:79px"></div><div class="gc" style="left:172px"></div><div class="gc" style="left:259px"></div><div class="gc" style="left:365px"></div><div class="gc" style="left:453px"></div><div class="gt" style="left:33px">Node 1</div><div class="gt" style="left:82px">19</div><div class="gt" style="left:175px">19</div><div class="gt" style="left:262px">Monitor19</div><div class="gt" style="left:368px">0 No Camera</div><div class="gt" style="left:456px">All Keyboards</div></div>
<div class="gr e" style="top:562px"><div class="rh"></div><div class="gc" style="left:79px"></div><div class="gc" style="left:172px"></div><div class="gc" style="left:259px"></div><div class="gc" style="left:365px"></div><div class="gc" style="left:453px"></div><div class="gt" style="left:33px">Node 1</div><div class="gt" style="left:82px">20</div><div class="gt" style="left:175px">20</div><div class="gt" style="left:262px">Monitor20</div><div class="gt" style="left:368px">0 No Camera</div><div class="gt" style="left:456px">All Keyboards</div></div>
<div class="gr o" style="top:584px"><div class="rh"></div><div class="gc" style="left:79px"></div><div class="gc" style="left:172px"></div><div class="gc" style="left:259px"></div><div class="gc" style="left:365px"></div><div class="gc" style="left:453px"></div><div class="gt" style="left:33px">Node 1</div><div class="gt" style="left:82px">21</div><div class="gt" style="left:175px">21</div><div class="gt" style="left:262px">Monitor21</div><div class="gt" style="left:368px">0 No Camera</div><div class="gt" style="left:456px">All Keyboards</div></div>
<div class="gr e" style="top:606px"><div class="rh"></div><div class="gc" style="left:79px"></div><div class="gc" style="left:172px"></div><div class="gc" style="left:259px"></div><div class="gc" style="left:365px"></div><div class="gc" style="left:453px"></div><div class="gt" style="left:33px">Node 1</div><div class="gt" style="left:82px">22</div><div class="gt" style="left:175px">22</div><div class="gt" style="left:262px">Monitor22</div><div class="gt" style="left:368px">0 No Camera</div><div class="gt" style="left:456px">All Keyboards</div></div>
<div class="gr o" style="top:628px"><div class="rh"></div><div class="gc" style="left:79px"></div><div class="gc" style="left:172px"></div><div class="gc" style="left:259px"></div><div class="gc" style="left:365px"></div><div class="gc" style="left:453px"></div><div class="gt" style="left:33px">Node 1</div><div class="gt" style="left:82px">23</div><div class="gt" style="left:175px">23</div><div class="gt" style="left:262px">Monitor23</div><div class="gt" style="left:368px">0 No Camera</div><div class="gt" style="left:456px">All Keyboards</div></div>

<!-- red ellipses -->
<svg style="left:0;top:0" width="930" height="640" viewBox="0 0 930 640">
 <ellipse cx="139.5" cy="253.7" rx="121.8" ry="18.4" fill="none" stroke="#ED1C24" stroke-width="5.4"/>
 <ellipse cx="215.5" cy="568.8" rx="211.3" ry="30.3" fill="none" stroke="#ED1C24" stroke-width="5.6"/>
</svg>
<!-- yellow border -->
<div class="a" style="left:0;top:0;width:930px;height:1px;background:#FFFF00"></div>
<div class="a" style="left:0;top:639px;width:930px;height:1px;background:#FFFF00"></div>
<div class="a" style="left:0;top:0;width:1px;height:640px;background:#FFFF00"></div>
<div class="a" style="left:929px;top:0;width:1px;height:640px;background:#FFFF00"></div>
</body></html>
